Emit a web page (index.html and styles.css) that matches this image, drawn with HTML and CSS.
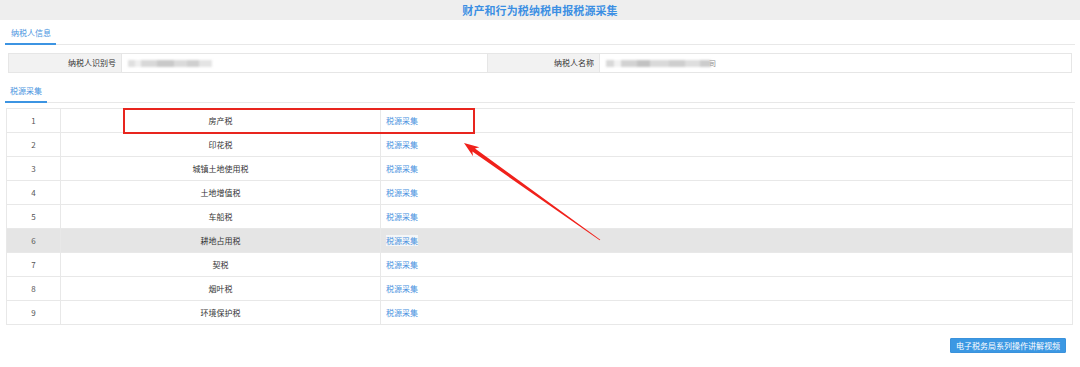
FILE: index.html
```html
<!DOCTYPE html>
<html lang="zh-CN">
<head>
<meta charset="utf-8">
<title>财产和行为税纳税申报税源采集</title>
<link rel="stylesheet" href="styles.css">
</head>
<body>
<div class="titlebar"><h1 class="title">财产和行为税纳税申报税源采集</h1></div>
<div class="section">
  <div class="tabs tabs-first"><span class="tab">纳税人信息</span></div>
  <div class="info">
    <div class="lbl">纳税人识别号</div>
    <div class="val"><span class="blur blur-a"></span></div>
    <div class="lbl">纳税人名称</div>
    <div class="val"><span class="blur blur-b"></span><span class="tail">司</span></div>
  </div>
  <div class="tabs tabs-second"><span class="tab">税源采集</span></div>
  <table class="grid">
    <colgroup><col class="c1"><col class="c2"><col></colgroup>
    <tbody>
      <tr><td class="num">1</td><td class="name">房产税</td><td><a class="link">税源采集</a></td></tr>
      <tr><td class="num">2</td><td class="name">印花税</td><td><a class="link">税源采集</a></td></tr>
      <tr><td class="num">3</td><td class="name">城镇土地使用税</td><td><a class="link">税源采集</a></td></tr>
      <tr><td class="num">4</td><td class="name">土地增值税</td><td><a class="link">税源采集</a></td></tr>
      <tr><td class="num">5</td><td class="name">车船税</td><td><a class="link">税源采集</a></td></tr>
      <tr class="hover"><td class="num">6</td><td class="name">耕地占用税</td><td><a class="link sel">税源采集</a></td></tr>
      <tr><td class="num">7</td><td class="name">契税</td><td><a class="link">税源采集</a></td></tr>
      <tr><td class="num">8</td><td class="name">烟叶税</td><td><a class="link">税源采集</a></td></tr>
      <tr><td class="num">9</td><td class="name">环境保护税</td><td><a class="link">税源采集</a></td></tr>
    </tbody>
  </table>
  <div class="footer"><button class="btn">电子税务局系列操作讲解视频</button></div>
</div>
<svg class="annot" width="1080" height="367" viewBox="0 0 1080 367">
  <rect x="124" y="109" width="350" height="24" fill="none" stroke="#e8251e" stroke-width="2"/>
  <polygon fill="#f0211b" points="464,143 479.4,147.3 475.0,148.6 600.3,239.7 599.7,240.3 472.4,151.6 473.0,156.3"/>
</svg>
</body>
</html>
```
FILE: styles.css
```css
html, body {
  margin: 0;
  padding: 0;
  background: #ffffff;
}
body {
  font-family: "Noto Sans CJK SC", "Noto Sans", sans-serif;
  font-size: 8px;
  color: #333333;
  position: relative;
  width: 1080px;
  height: 367px;
  overflow: hidden;
}
.titlebar {
  height: 20px;
  background: #eeeeee;
  display: flex;
  align-items: center;
  justify-content: center;
}
.title {
  margin: 0;
  font-size: 11px;
  line-height: 20px;
  font-weight: bold;
  color: #3b8fe3;
  letter-spacing: 0.1px;
}
.section {
  padding: 0 5px;
}
.tabs {
  display: flex;
  border-bottom: 1px solid #e8e8e8;
}
.tabs-first { margin-top: 3px; }
.tabs-second { margin-top: 8px; }
.tab {
  height: 20px;
  line-height: 20px;
  padding: 0 5px 0 6px;
  color: #4a94e0;
  border-bottom: 2px solid #3c94e2;
  margin-bottom: -1px;
}
.tabs-second .tab { padding: 0 5px 0 5px; }
.info {
  margin: 8px 3px 0 3px;
  display: grid;
  grid-template-columns: 113px 366px 112px 1fr;
  border: 1px solid #e6e6e6;
  height: 18px;
}
.lbl {
  background: #f2f2f2;
  text-align: right;
  padding-right: 5px;
  line-height: 18px;
  color: #333;
  border-right: 1px solid #e6e6e6;
}
.val {
  line-height: 18px;
  padding-left: 6px;
  display: flex;
  align-items: center;
  border-right: 1px solid #e6e6e6;
}
.val:last-child { border-right: none; }
.blur {
  display: inline-block;
  height: 7px;
  filter: blur(1.2px);
  opacity: 0.8;
}
.blur-a {
  width: 84px;
  background: linear-gradient(90deg, #d8d8d8 0 8%, #ececec 8% 15%, #cfcfcf 15% 35%, #bcbcbc 35% 55%, #d2d2d2 55% 70%, #c4c4c4 70% 85%, #dedede 85% 100%);
}
.blur-b {
  width: 105px;
  background: linear-gradient(90deg, #cfcfcf 0 8%, #f0f0f0 8% 14%, #c8c8c8 14% 30%, #b4b4b4 30% 42%, #d0d0d0 42% 60%, #c2c2c2 60% 75%, #d6d6d6 75% 90%, #c0c0c0 90% 100%);
}
.tail {
  color: #888;
  margin-left: -2px;
  font-size: 7px;
}
.grid {
  margin: 5px 2px 0 1px;
  width: calc(100% - 3px);
  border-collapse: collapse;
  border: 1px solid #e6e6e6;
}
.grid col.c1 { width: 54px; }
.grid col.c2 { width: 320px; }
.grid td {
  height: 23px;
  padding: 0;
  border: 1px solid #e8e8e8;
  line-height: 12px;
}
.grid td.num {
  text-align: center;
  color: #555555;
}
.grid td.name {
  text-align: center;
  color: #333333;
}
.grid td:last-child {
  padding-left: 5px;
}
.grid tr.hover td {
  background: #e5e5e5;
}
.link {
  color: #4a92e0;
  cursor: pointer;
}
.link.sel {
  background: #f4f6f8;
}
.footer {
  display: flex;
  justify-content: flex-end;
  margin-top: 13px;
  padding-right: 9px;
}
.btn {
  font-family: "Noto Sans CJK SC", "Noto Sans", sans-serif;
  font-size: 8px;
  height: 15px;
  line-height: 13px;
  padding: 0 5px;
  color: #ffffff;
  background: #3c98e3;
  border: 1px solid #3a92dc;
  border-radius: 1px;
}
.annot {
  position: absolute;
  left: 0;
  top: 0;
  pointer-events: none;
}
```
